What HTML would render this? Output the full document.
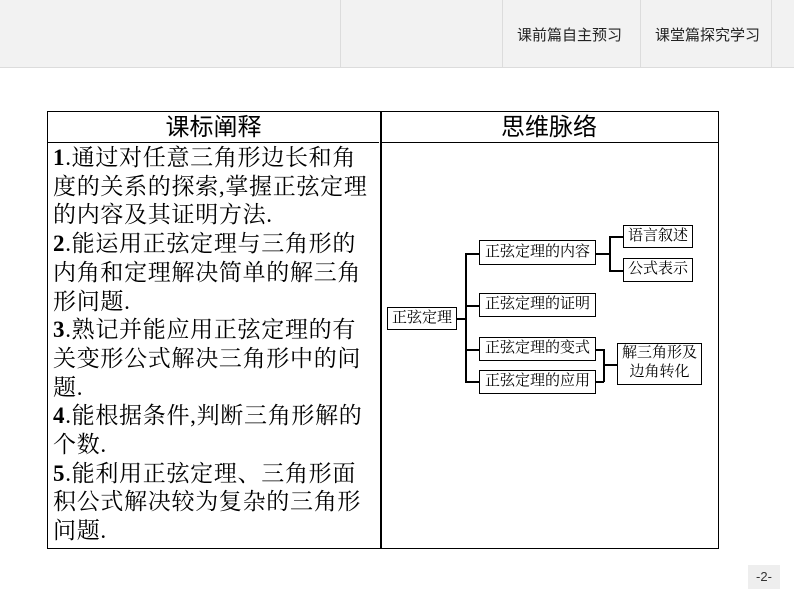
<!DOCTYPE html>
<html><head><meta charset="utf-8"><style>
body{margin:0;width:794px;height:596px;background:#fff;position:relative;overflow:hidden;font-family:"Liberation Serif","Noto Serif CJK SC",serif;}
.hdr{position:absolute;left:0;top:0;width:794px;height:67px;background:#f2f2f2;border-bottom:1px solid #dcdcdc;}
.vd{position:absolute;top:0;height:67px;width:1px;background:#dcdcdc;}
.nav{position:absolute;top:24px;font:15px "Liberation Sans","Noto Sans CJK SC",sans-serif;color:#222;}
.tbl{position:absolute;left:47px;top:111px;width:670px;height:436px;border:1.5px solid #000;}
.th{position:absolute;top:0;height:30px;border-bottom:1.5px solid #000;font:24px "Liberation Sans","Noto Sans CJK SC",sans-serif;text-align:center;line-height:32px;}
.left{position:absolute;left:5px;top:32px;font-size:23px;line-height:28.7px;white-space:nowrap;letter-spacing:0.7px;}
.b{position:absolute;border:1.5px solid #000;font-size:15px;line-height:20px;text-align:center;box-sizing:border-box;background:#fff;white-space:nowrap;}
.l{position:absolute;background:#000;}
.pg{position:absolute;left:748px;top:565px;width:32px;height:24px;background:#eee;font:13px "Liberation Sans",sans-serif;text-align:center;line-height:24px;color:#333;}
</style></head><body>
<div class="hdr">
<div class="vd" style="left:340px"></div><div class="vd" style="left:502px"></div><div class="vd" style="left:640px"></div><div class="vd" style="left:771px"></div>
<div class="nav" style="left:517px">课前篇自主预习</div>
<div class="nav" style="left:655px">课堂篇探究学习</div>
</div>
<div class="tbl">
<div class="th" style="left:0;width:331px">课标阐释</div>
<div class="th" style="left:332px;right:0">思维脉络</div>
<div style="position:absolute;left:332px;top:0;width:1.5px;height:436px;background:#000"></div>
<div class="left"><b>1</b>.通过对任意三角形边长和角<br>度的关系的探索,掌握正弦定理<br>的内容及其证明方法.<br><b>2</b>.能运用正弦定理与三角形的<br>内角和定理解决简单的解三角<br>形问题.<br><b>3</b>.熟记并能应用正弦定理的有<br>关变形公式解决三角形中的问<br>题.<br><b>4</b>.能根据条件,判断三角形解的<br>个数.<br><b>5</b>.能利用正弦定理、三角形面<br>积公式解决较为复杂的三角形<br>问题.</div>
</div>
<div class="b" style="left:387px;top:307px;width:70px;height:23px">正弦定理</div>
<div class="b" style="left:479px;top:240px;width:117px;height:25px;line-height:22px">正弦定理的内容</div>
<div class="b" style="left:479px;top:293px;width:117px;height:24px;line-height:21px">正弦定理的证明</div>
<div class="b" style="left:479px;top:337px;width:117px;height:24px;line-height:21px">正弦定理的变式</div>
<div class="b" style="left:479px;top:370px;width:117px;height:24px;line-height:21px">正弦定理的应用</div>
<div class="b" style="left:623px;top:225px;width:70px;height:23px">语言叙述</div>
<div class="b" style="left:623px;top:258px;width:70px;height:24px">公式表示</div>
<div class="b" style="left:617px;top:343px;width:85px;height:42px;line-height:19px">解三角形及<br>边角转化</div>
<div class="l" style="left:457px;top:318px;width:9px;height:1.5px"></div>
<div class="l" style="left:465px;top:253px;width:1.5px;height:129px"></div>
<div class="l" style="left:465px;top:253px;width:14px;height:1.5px"></div>
<div class="l" style="left:465px;top:305px;width:14px;height:1.5px"></div>
<div class="l" style="left:465px;top:349px;width:14px;height:1.5px"></div>
<div class="l" style="left:465px;top:381px;width:14px;height:1.5px"></div>
<div class="l" style="left:596px;top:253px;width:14px;height:1.5px"></div>
<div class="l" style="left:609px;top:236px;width:1.5px;height:35px"></div>
<div class="l" style="left:609px;top:236px;width:14px;height:1.5px"></div>
<div class="l" style="left:609px;top:270px;width:14px;height:1.5px"></div>
<div class="l" style="left:596px;top:349px;width:8px;height:1.5px"></div>
<div class="l" style="left:596px;top:381px;width:8px;height:1.5px"></div>
<div class="l" style="left:603px;top:349px;width:1.5px;height:33px"></div>
<div class="l" style="left:603px;top:364px;width:14px;height:1.5px"></div>
<div class="pg">-2-</div>
</body></html>
